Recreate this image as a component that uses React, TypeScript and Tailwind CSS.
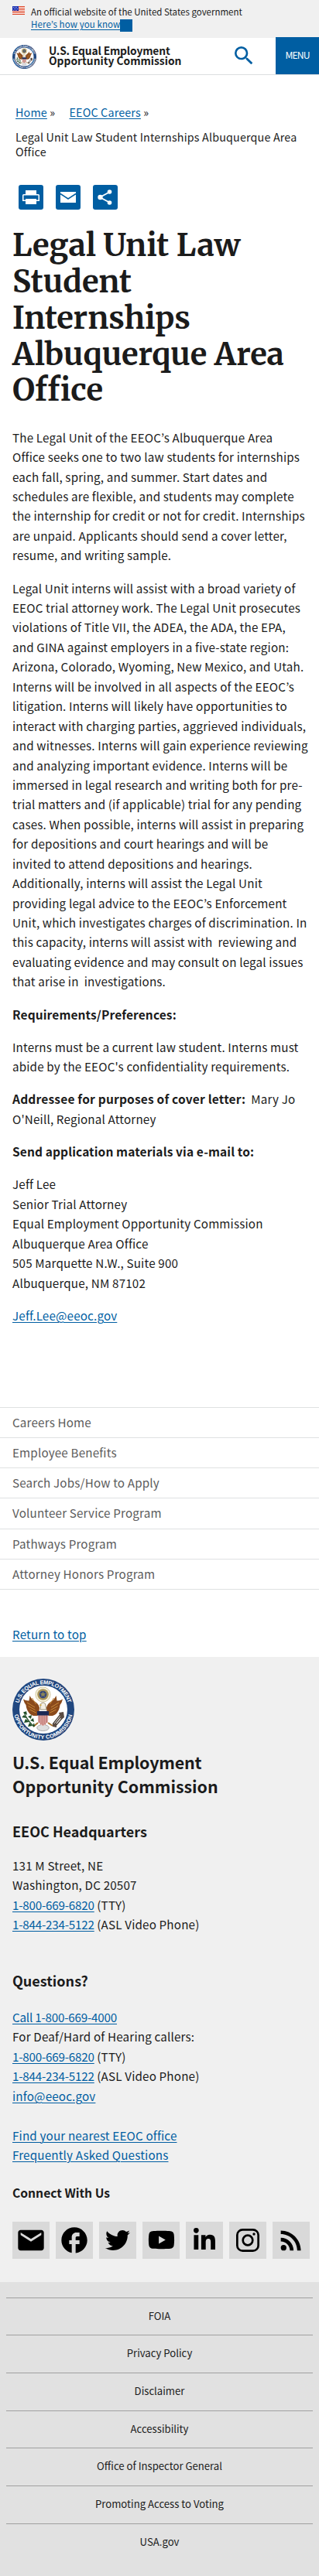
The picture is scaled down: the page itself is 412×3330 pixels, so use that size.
import React from 'react';
import { MdEmail, MdFacebook, MdRssFeed, MdSearch } from 'react-icons/md';
import { FaTwitter, FaYoutube, FaLinkedinIn } from 'react-icons/fa';

const link = 'text-[#005ea2] underline decoration-1 underline-offset-[2px]';
const phone = 'text-[#005ea2] underline decoration-1 underline-offset-[2px] tracking-[-0.2px]';
const bold = 'text-[15.5px] font-bold tracking-[0.12px]';

function Flag() {
  return (
    <svg className="mt-2 h-[11px] w-4 shrink-0" viewBox="0 0 16 11" shapeRendering="crispEdges">
      <rect width="16" height="11" fill="#fff" />
      {[0, 2, 4, 6, 8, 10].map((y) => (
        <rect key={y} y={y} width="16" height="1" fill="#db3e1f" />
      ))}
      <rect width="8" height="6" fill="#1e33b1" />
      {[1, 3, 5].map((y) =>
        [1, 3, 5].map((x) => (
          <rect key={`${x}-${y}`} x={x + (y === 3 ? 1 : 0)} y={y} width="1" height="1" fill="#a9b4e8" />
        )),
      )}
    </svg>
  );
}

function Seal({ id, className }: { id: string; className: string }) {
  return (
    <svg className={className} viewBox="0 0 80 80">
      <defs>
        <path id={`${id}-top`} d="M7.2 40a32.8 32.8 0 0 1 65.6 0" />
        <path id={`${id}-bottom`} d="M1.9 40a38.1 38.1 0 0 0 76.2 0" />
      </defs>
      <circle cx="40" cy="40" r="40" fill="#21477f" />
      <circle cx="40" cy="40" r="31" fill="#fff" />
      <g fill="#fff" fontFamily="Liberation Sans, sans-serif" fontSize="7.2" fontWeight="700" textAnchor="middle">
        <text textLength="86" lengthAdjust="spacing"><textPath href={`#${id}-top`} startOffset="50%">U.S. EQUAL EMPLOYMENT</textPath></text>
        <text textLength="106" lengthAdjust="spacing"><textPath href={`#${id}-bottom`} startOffset="50%">OPPORTUNITY COMMISSION</textPath></text>
      </g>
      {/* glory */}
      <circle cx="39.5" cy="20.5" r="9.6" fill="#f6f1dc" stroke="#c9bd8c" strokeWidth=".8" />
      <circle cx="39.5" cy="20.5" r="7.3" fill="#a8955a" />
      <circle cx="39.5" cy="20.5" r="4.8" fill="#36477a" />
      <path d="M39.5 16.5l1 2.5 2.7.2-2 1.7.7 2.7-2.4-1.5-2.4 1.5.7-2.7-2-1.7 2.7-.2z" fill="#8d8756" />
      {/* wings */}
      <path d="M14 26.5q3.500 2.500 7.500 2l1-6.500q3 6 6.500 7.500 5 3 6 8l-1 10q-8 2-12-2.500-4-5-4.500-11-2.500-3-3.500-7.500z" fill="#8a4a1c" />
      <path d="M65 26.500q-3.500 2.500-7.500 2l-1-6.500q-3 6-6.500 7.500-5 3-6 8l1 10q8 2 12-2.500 4-5 4.500-11 2.500-3 3.500-7.500z" fill="#8a4a1c" />
      <path d="M19 31l10 6M20.500 35.500l9 5M22.500 40l8 4M25.500 25l5 8M60 31l-10 6M58.500 35.500l-9 5M56.500 40l-8 4M53.500 25l-5 8" stroke="#c98a3a" strokeWidth="1" fill="none" />
      {/* head and tail */}
      <path d="M35.500 34l2-2.500q3-1.500 5 1l1.500 7.500h-8l.5-4z" fill="#f3efe4" stroke="#7d6b4a" strokeWidth=".7" />
      <path d="M34.500 34.500l3-1.500v2z" fill="#d9a521" />
      <ellipse cx="39.500" cy="63.500" rx="7.800" ry="4" fill="#dedede" stroke="#9a9aa0" strokeWidth=".8" />
      <path d="M33 57l-6 5M46 57l6 4" stroke="#a5702a" strokeWidth="2" />
      {/* shield */}
      <path d="M32.500 43h14v11q-1.500 5.500-7 7-5.500-1.500-7-7z" fill="#f2dcd8" />
      <path d="M34.500 47v10M37 47v12.500M39.500 47v13.500M42 47v12.500M44.500 47v10" stroke="#a8403a" strokeWidth="1.200" />
      <path d="M32 42h15v5.500H32z" fill="#1c2a55" />
      {/* olive branch */}
      <path d="M15 43q3 10 13 19" stroke="#24502a" strokeWidth="1.300" fill="none" />
      <path d="M14 44l5 3-1-5zM12 50l7 1-4-4zM15 57l7-1-5-4zM20 62l6-1-4-4zM20 49l4 3 1-5zM23 54l5 2-1-5zM26 61l3 1-1-5z" fill="#1f4d27" />
      {/* arrows */}
      <path d="M53 61l12-15M55 62l11-13M52 59l11-14" stroke="#4a4038" strokeWidth="1.300" />
      <path d="M60 44l6-1 1 7-4 3zM52 58l5 0 0 5-5-1z" fill="#5a4b42" />
    </svg>
  );
}

function ShareTile({ children }: { children: React.ReactNode }) {
  return (
    <a className="block size-8 rounded-[3px] bg-[#005ea2]">
      <svg viewBox="0 0 32 32" className="size-8">{children}</svg>
    </a>
  );
}

function Instagram() {
  return (
    <svg viewBox="0 0 30 30" className="size-[30px]" fill="none" stroke="#000" strokeWidth="2.700">
      <rect x="1.350" y="1.350" width="27.300" height="27.300" rx="7" />
      <circle cx="15" cy="15" r="6.300" />
      <circle cx="23" cy="7" r="1.700" fill="#000" stroke="none" />
    </svg>
  );
}

const sideLinks = [
  'Careers Home',
  'Employee Benefits',
  'Search Jobs/How to Apply',
  'Volunteer Service Program',
  'Pathways Program',
  'Attorney Honors Program',
];

const bottomLinks = [
  'FOIA',
  'Privacy Policy',
  'Disclaimer',
  'Accessibility',
  'Office of Inspector General',
  'Promoting Access to Voting',
  'USA.gov',
];

const social = [
  <MdEmail className="size-10" />,
  <MdFacebook className="size-10" />,
  <FaTwitter className="size-8" />,
  <FaYoutube className="size-[35px]" />,
  <FaLinkedinIn className="size-8" />,
  <Instagram />,
  <MdRssFeed className="size-10" />,
];

export default function App() {
  return (
    <div className='flex w-[412px] flex-col bg-white font-["Noto_Sans_CJK_KR",sans-serif] text-[15.2px] leading-[25.44px] tracking-[0.17px] whitespace-nowrap text-[#1b1b1b]'>
      <header>
        <div className="flex h-[49px] gap-2 bg-[#f0f0f0] pl-4">
          <Flag />
          <div className="pt-[7px] text-[11.5px] leading-4 tracking-normal">
            <p>An official website of the United States government</p>
            <p className="flex items-start">
              <a className="tracking-[0.1px] text-[#005ea2] underline decoration-1 underline-offset-[2px]">Here’s how you know</a>
              <span className="mt-[2px] size-4 bg-[#005ea2]" />
            </p>
          </div>
        </div>
        <div className="flex h-12 border-b border-[#dcdee0]">
          <Seal id="header-seal" className="mt-[9px] ml-4 size-[31px]" />
          <p className="mt-[9.5px] ml-4 w-[236px] text-[13.8px] leading-[13px] font-bold tracking-normal">
            <span className="tracking-[-0.15px]">U.S. Equal Employment</span>
            <br />
            Opportunity Commission
          </p>
          <MdSearch className="mt-[7px] size-8 text-[#005ea2]" />
          <button className="-mt-px ml-auto h-12 w-14 bg-[#005ea2] text-[12.2px] tracking-[-0.9px] text-white">MENU</button>
        </div>
      </header>

      <main>
        <nav className="mt-[38px] pl-5 text-[14.3px] leading-[19px]">
          <div className="flex">
            <span className="w-[69.500px]"><a className={link}>Home</a> »</span>
            <span><a className={link}>EEOC Careers</a> »</span>
          </div>
          <p className="mt-[13px]">
            Legal Unit Law Student Internships Albuquerque Area
            <br />
            Office
          </p>
        </nav>

        <div className="mt-[34px] flex gap-4 pl-6">
          <ShareTile>
            <path d="M9 7h14v5h2.500a1.500 1.500 0 0 1 1.500 1.500V21h-4v4H9v-4H5v-7.500A1.500 1.500 0 0 1 6.500 12H9z" fill="#fff" />
            <path d="M6.500 13.500h19v6H23V18H9v1.500H6.500z" fill="#005ea2" />
          </ShareTile>
          <ShareTile>
            <path d="M6 9h20v14H6z" fill="#fff" />
            <path d="M6 11.500l10 6.500 10-6.500" stroke="#005ea2" strokeWidth="1.500" fill="none" />
          </ShareTile>
          <ShareTile>
            <path d="M22 9L9 16l13 7" stroke="#fff" strokeWidth="1.800" fill="none" />
            <circle cx="21.500" cy="9" r="2.800" fill="#fff" />
            <circle cx="9.500" cy="16" r="3.200" fill="#fff" />
            <circle cx="21.500" cy="23" r="2.800" fill="#fff" />
          </ShareTile>
        </div>

        <h1 className='mt-[23px] pl-4 font-["Merriweather","DejaVu_Serif_Condensed",serif] text-[39.900px] leading-[46.850px] font-bold tracking-normal'>
          Legal Unit Law
          <br />
          Student
          <br />
          Internships
          <br />
          Albuquerque Area
          <br />
          Office
        </h1>

        <article className="mt-[24.500px] flex flex-col gap-[16.800px] pl-4">
          <p>
            The Legal Unit of the EEOC’s Albuquerque Area
            <br />
            Office seeks one to two law students for internships
            <br />
            each fall, spring, and summer. Start dates and
            <br />
            schedules are flexible, and students may complete
            <br />
            the internship for credit or not for credit. Internships
            <br />
            are unpaid. Applicants should send a cover letter,
            <br />
            resume, and writing sample.
          </p>
          <p>
            Legal Unit interns will assist with a broad variety of
            <br />
            EEOC trial attorney work. The Legal Unit prosecutes
            <br />
            violations of Title VII, the ADEA, the ADA, the EPA,
            <br />
            and GINA against employers in a five-state region:
            <br />
            Arizona, Colorado, Wyoming, New Mexico, and Utah.
            <br />
            Interns will be involved in all aspects of the EEOC’s
            <br />
            litigation. Interns will likely have opportunities to
            <br />
            interact with charging parties, aggrieved individuals,
            <br />
            and witnesses. Interns will gain experience reviewing
            <br />
            and analyzing important evidence. Interns will be
            <br />
            immersed in legal research and writing both for pre-
            <br />
            trial matters and (if applicable) trial for any pending
            <br />
            cases. When possible, interns will assist in preparing
            <br />
            for depositions and court hearings and will be
            <br />
            invited to attend depositions and hearings.
            <br />
            Additionally, interns will assist the Legal Unit
            <br />
            providing legal advice to the EEOC’s Enforcement
            <br />
            Unit, which investigates charges of discrimination. In
            <br />
            this capacity, interns will assist with&nbsp; reviewing and
            <br />
            evaluating evidence and may consult on legal issues
            <br />
            that arise in&nbsp; investigations.
          </p>
          <p className={bold}>Requirements/Preferences:</p>
          <p>
            Interns must be a current law student. Interns must
            <br />
            abide by the EEOC's confidentiality requirements.
          </p>
          <p>
            <strong className="text-[15.500px] font-bold tracking-[0.2px]">Addressee for purposes of cover letter:</strong>&nbsp; Mary Jo
            <br />
            O'Neill, Regional Attorney
          </p>
          <p className={bold}>Send application materials via e-mail to:</p>
          <p>
            Jeff Lee
            <br />
            Senior Trial Attorney
            <br />
            Equal Employment Opportunity Commission
            <br />
            Albuquerque Area Office
            <br />
            505 Marquette N.W., Suite 900
            <br />
            Albuquerque, NM 87102
          </p>
          <p>
            <a className={link}>Jeff.Lee@eeoc.gov</a>
          </p>
        </article>

        <nav className="mt-[105.600px] border-b border-[#dfe1e2] text-[#5c5c5c]">
          {sideLinks.map((t) => (
            <a key={t} className="block h-[39.200px] border-t border-[#dfe1e2] pt-[6px] pl-4 leading-[25px]">{t}</a>
          ))}
        </nav>
        <p className="mt-[44.800px] mb-[16.900px] pl-4">
          <a className={link}>Return to top</a>
        </p>
      </main>

      <footer>
        <section className="h-[807.700px] bg-[#f0f0f0] pt-[27.700px] pl-4">
          <Seal id="footer-seal" className="block size-20" />
          <h2 className="mt-[12.300px] text-[21.400px] leading-[31px] font-bold tracking-normal">
            <span className="tracking-[-0.150px]">U.S. Equal Employment</span>
            <br />
            Opportunity Commission
          </h2>
          <h3 className="mt-[30.200px] text-[18px] leading-[27px] font-bold tracking-normal">EEOC Headquarters</h3>
          <p className="mt-[17.500px]">
            131 M Street, NE
            <br />
            Washington, DC 20507
            <br />
            <a className={phone}>1-800-669-6820</a> (TTY)
            <br />
            <a className={phone}>1-844-234-5122</a> (ASL Video Phone)
          </p>
          <h3 className="mt-[46.400px] text-[18px] leading-[27px] font-bold tracking-normal">Questions?</h3>
          <p className="mt-[21.100px]">
            <a className={phone}>Call 1-800-669-4000</a>
            <br />
            For Deaf/Hard of Hearing callers:
            <br />
            <a className={phone}>1-800-669-6820</a> (TTY)
            <br />
            <a className={phone}>1-844-234-5122</a> (ASL Video Phone)
            <br />
            <a className={link}>info@eeoc.gov</a>
            <br />
            <br />
            <a className={link}>Find your nearest EEOC office</a>
            <br />
            <a className={link}>Frequently Asked Questions</a>
          </p>
          <h4 className="mt-[23.200px] text-[15.670px] leading-[25px] font-bold tracking-normal">Connect With Us</h4>
          <div className="mt-[25px] flex gap-2">
            {social.map((icon, i) => (
              <a key={i} className="flex size-12 items-center justify-center bg-[#d9d9d9] text-black">{icon}</a>
            ))}
          </div>
        </section>
        <section className="h-[380px] bg-[#e1e1e1] px-2 pt-5">
          {bottomLinks.map((t) => (
            <a key={t} className="block h-[48.640px] border-t border-[#a0a0a0] pt-[11px] text-center text-[13.150px] leading-6 tracking-normal">{t}</a>
          ))}
        </section>
      </footer>
    </div>
  );
}
